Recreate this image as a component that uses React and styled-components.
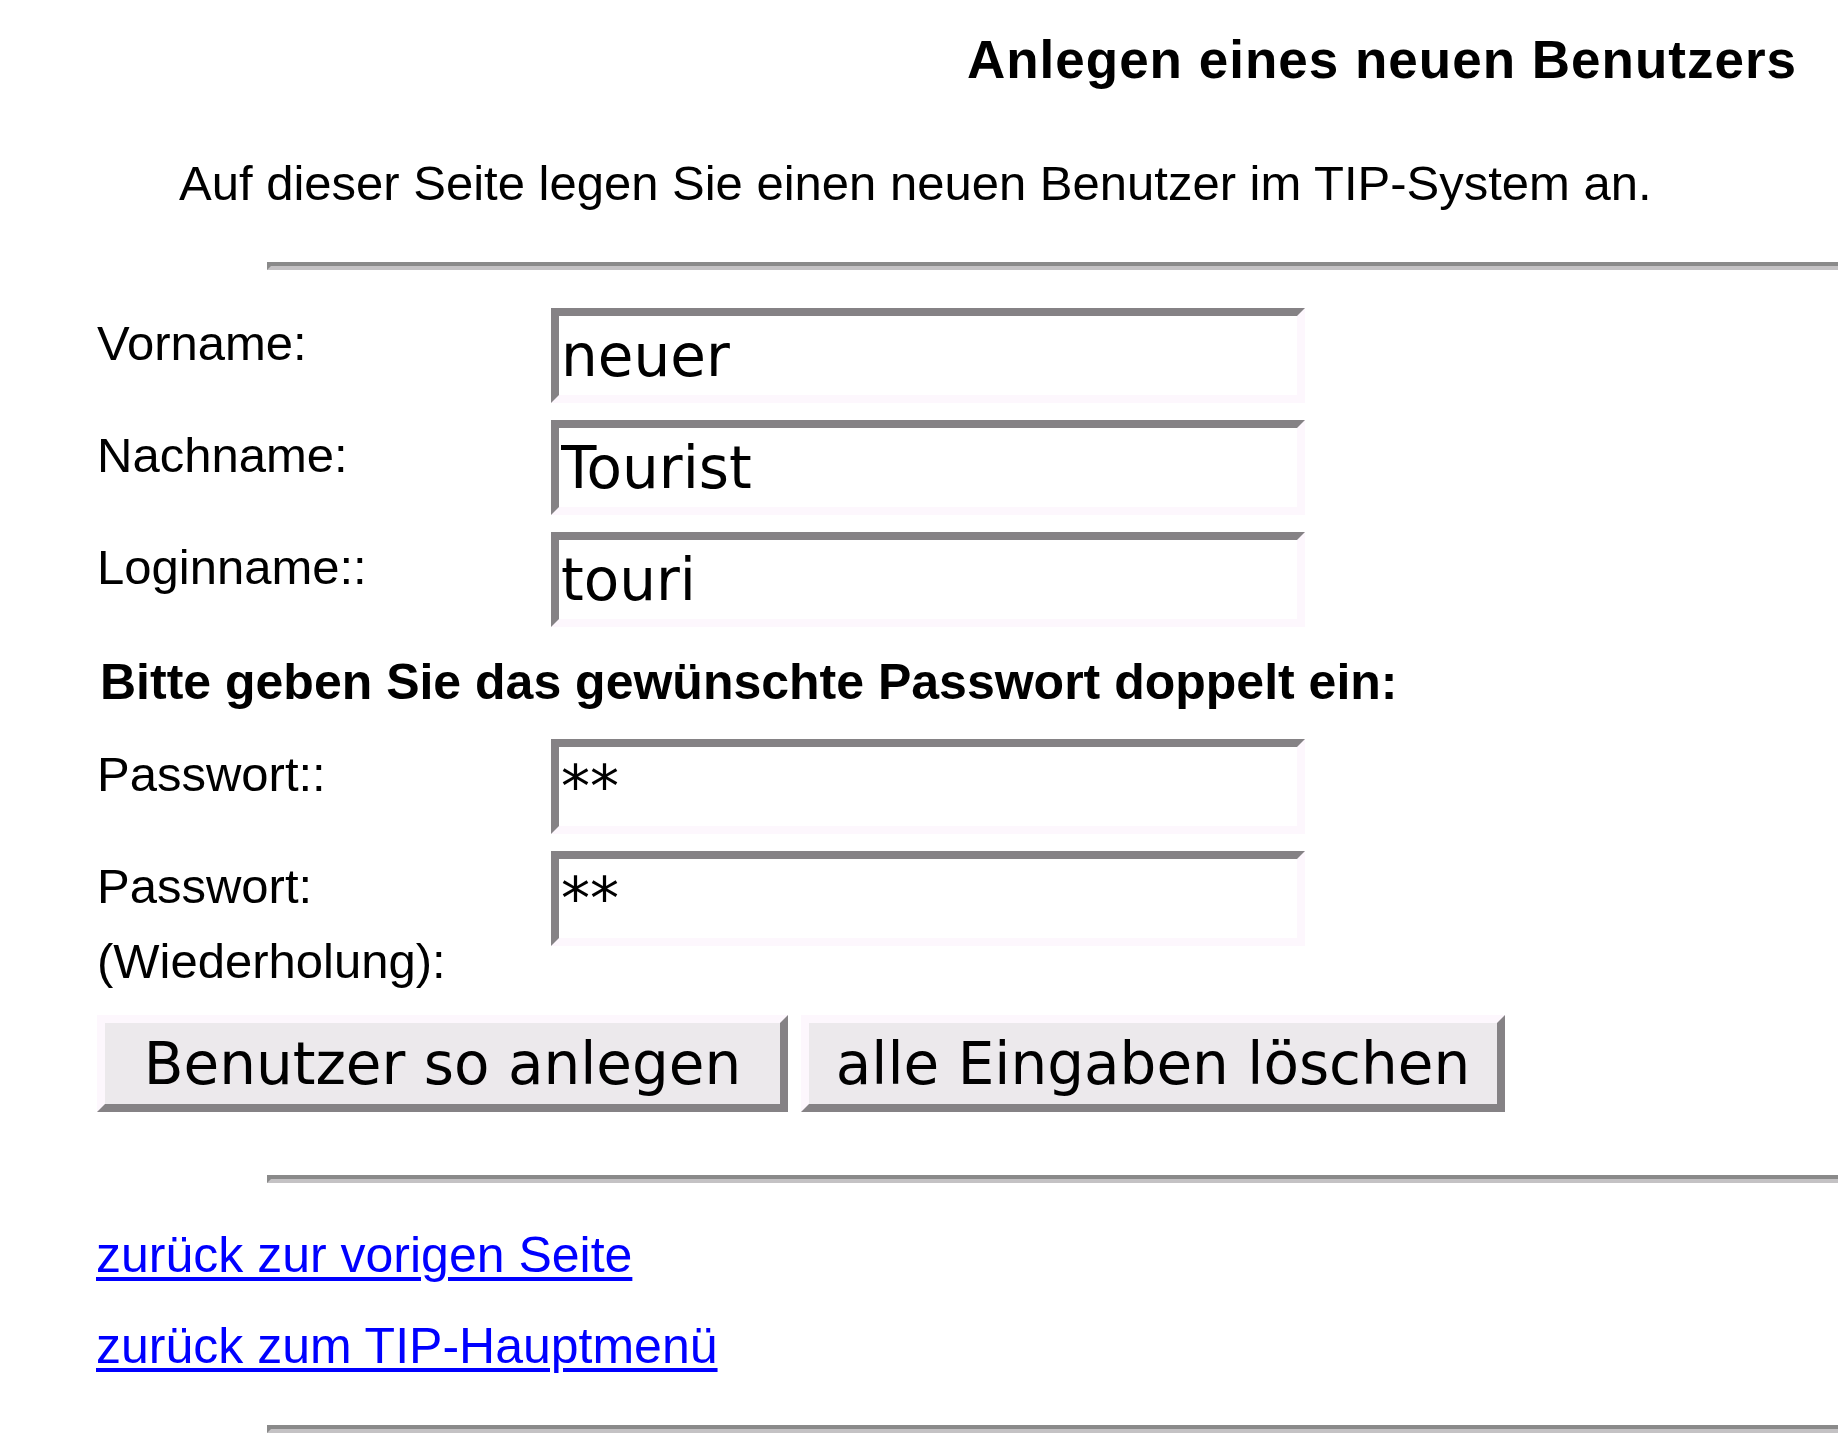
import React from "react";
import styled, { createGlobalStyle } from "styled-components";

const Global = createGlobalStyle`
  html, body { margin: 0; padding: 0; background: #ffffff; }
  body { font-family: "Liberation Sans", Arial, sans-serif; color: #000; }
`;

const Page = styled.div`
  width: 1838px;
  min-height: 1446px;
  box-sizing: border-box;
  padding-top: 30px;
  display: flex;
  flex-direction: column;
  overflow: hidden;
`;

const Title = styled.h1`
  margin: 0;
  padding-right: 41px;
  text-align: right;
  font-size: 53px;
  font-weight: bold;
  letter-spacing: 1px;
  line-height: 60px;
`;

const Intro = styled.p`
  margin: 65px 0 0 179px;
  font-size: 49px;
  line-height: 56px;
`;

const Rule = styled.div`
  margin: ${(p) => p.$top}px 0 0 267px;
  height: 0;
  border-top: 4px solid #8a8a8a;
  border-bottom: 4px solid #c4c2c4;
  border-left: 4px solid #8a8a8a;
`;

const Form = styled.form`
  margin: 36px 0 0 0;
  padding-left: 97px;
  display: flex;
  flex-direction: column;
`;

const Grid = styled.div`
  display: grid;
  grid-template-columns: 454px 754px;
  row-gap: 15px;
  align-items: start;
`;

const Label = styled.label`
  font-size: 49px;
  line-height: 75px;
`;

const Field = styled.input`
  margin-top: 2px;
  width: 754px;
  height: 95px;
  box-sizing: border-box;
  border-style: solid;
  border-width: 8px;
  border-color: #858285 #fdf7fd #fdf7fd #858285;
  background: #fff;
  padding: 0 0 0 2px;
  font-family: "DejaVu Sans", Verdana, sans-serif;
  font-size: 58px;
  color: #000;
  outline: none;
`;

const Notice = styled.div`
  grid-column: 1 / -1;
  font-size: 50px;
  font-weight: bold;
  line-height: 80px;
  padding-left: 3px;
  white-space: nowrap;
`;

const Buttons = styled.div`
  display: flex;
  gap: 13px;
  margin-top: 16px;
`;

const Button = styled.button`
  width: ${(p) => p.$w}px;
  height: 97px;
  box-sizing: border-box;
  border-style: solid;
  border-width: 8px;
  border-color: #fdf7fd #858285 #858285 #fdf7fd;
  background: #ece9ec;
  padding: 0;
  font-family: "DejaVu Sans", Verdana, sans-serif;
  font-size: 58px;
  color: #000;
  cursor: pointer;
`;

const Links = styled.nav`
  margin-top: 27px;
  padding-left: 96px;
  display: flex;
  flex-direction: column;
  align-items: flex-start;
`;

const Link = styled.a`
  font-size: 50px;
  line-height: 91px;
  color: #0000ff;
  text-decoration: underline;
  text-decoration-thickness: 4px;
  text-underline-offset: 5px;
`;

export default function App() {
  return (
    <>
      <Global />
      <Page>
        <Title>Anlegen eines neuen Benutzers</Title>
        <Intro>Auf dieser Seite legen Sie einen neuen Benutzer im TIP-System an.</Intro>
        <Rule $top={51} />
        <Form onSubmit={(e) => e.preventDefault()}>
          <Grid>
            <Label>Vorname:</Label>
            <Field type="text" defaultValue="neuer" />
            <Label>Nachname:</Label>
            <Field type="text" defaultValue="Tourist" />
            <Label>Loginname::</Label>
            <Field type="text" defaultValue="touri" />
            <Notice>Bitte geben Sie das gewünschte Passwort doppelt ein:</Notice>
            <Label>Passwort::</Label>
            <Field type="text" defaultValue="**" />
            <Label>
              Passwort:
              <br />
              (Wiederholung):
            </Label>
            <Field type="text" defaultValue="**" />
          </Grid>
          <Buttons>
            <Button type="submit" $w={691}>Benutzer so anlegen</Button>
            <Button type="reset" $w={704}>alle Eingaben löschen</Button>
          </Buttons>
        </Form>
        <Rule $top={63} />
        <Links>
          <Link href="#">zurück zur vorigen Seite</Link>
          <Link href="#">zurück zum TIP-Hauptmenü</Link>
        </Links>
        <Rule $top={33} />
      </Page>
    </>
  );
}
